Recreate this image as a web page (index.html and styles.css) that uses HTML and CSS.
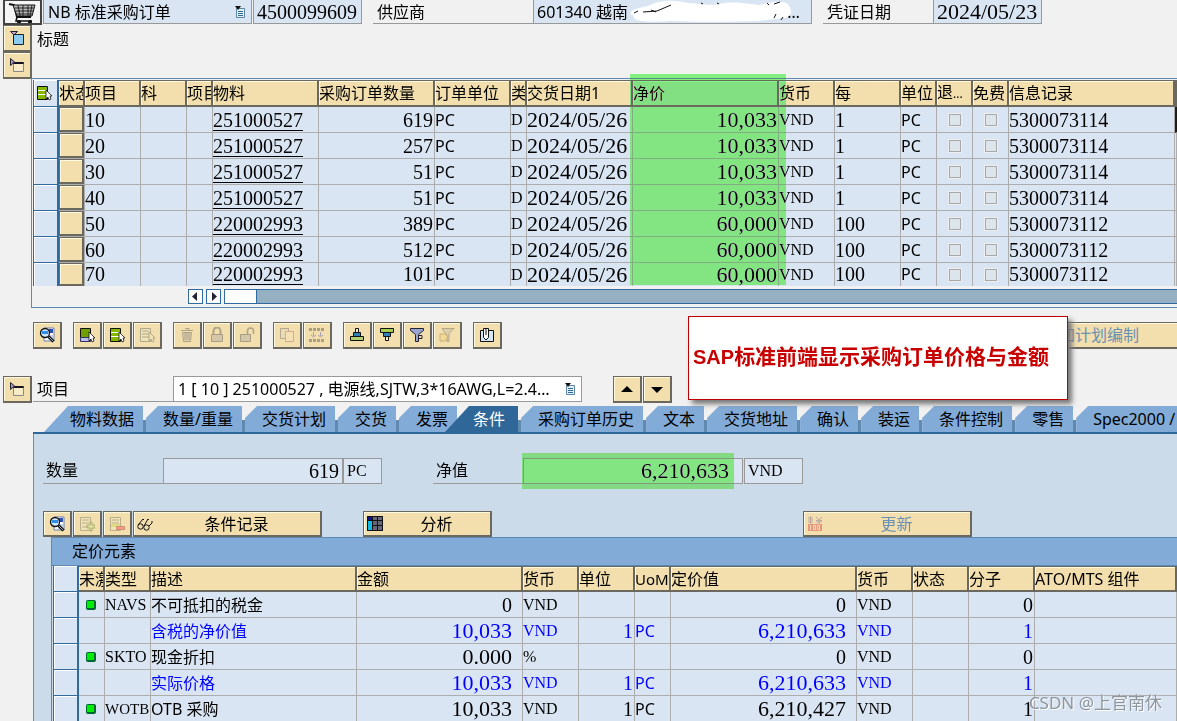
FILE: index.html
```html
<!DOCTYPE html>
<html lang="zh-CN">
<head>
<meta charset="utf-8">
<title>标准采购订单</title>
<link rel="stylesheet" href="styles.css">
</head>
<body>
<svg class="defs" width="0" height="0" aria-hidden="true">
  <defs>
    <symbol id="i-detail" viewBox="0 0 16 16"><path d="M5 1h10v13H5z" fill="#fff" stroke="#6a7fb0"/><path d="M10 2h4v4h-4z" fill="#2b50b0"/><path d="M11 8h3v5h-5z" fill="#c9cfea"/><circle cx="6" cy="6" r="4.5" fill="#cfe6ff" stroke="#111" stroke-width="1.3"/><path d="M3 4h6v3H3z" fill="#2f8fe8"/><path d="M9.500 9.500l5 5" stroke="#111" stroke-width="3"/><path d="M10 10l4 4" stroke="#9ab" stroke-width="1"/></symbol>
    <symbol id="i-doc" viewBox="0 0 12 12"><path d="M2.500 2.500h8v9h-8z" fill="#dff0fa" stroke="#5d86a8"/><path d="M4 5.500h5M4 7.500h5M4 9.500h5" stroke="#35698f"/><path d="M1 0h6L4 4z" fill="#111"/></symbol>
    <symbol id="i-open" viewBox="0 0 16 16"><path d="M4.500 4.500h10v10h-10z" fill="#8ecbf0" stroke="#123"/><path d="M1.500 1.500h7L5 5z" fill="#c8a8d0" stroke="#223"/></symbol>
    <symbol id="i-closed" viewBox="0 0 16 16"><path d="M4.500 6.500h10v8h-10z" fill="#f7ecc8" stroke="#888"/><path d="M4.500 5.500h10v1h-10z" fill="#fff" stroke="#112"/><path d="M1.500 1.500v7l4-3.500z" fill="#b08ac0" stroke="#223"/></symbol>
    <symbol id="i-list" viewBox="0 0 16 16"><path d="M1.500 1.500h10v4h-10zM1.500 5.500h10v4h-10zM1.500 9.500h10v5h-10z" fill="#86b800" stroke="#111"/><path d="M2 5.500h9M2 9.500h9" stroke="#fff"/><path d="M10 5v9l2-2 1 3 2-1-1-3h2z" fill="#fff" stroke="#111" stroke-width=".8"/></symbol>
    <symbol id="i-first" viewBox="0 0 16 16"><path d="M1.500 1.500h10v9h-10z" fill="#6fa000" stroke="#111"/><path d="M1.500 10.500h10v4h-10z" fill="#bcc0e8" stroke="#336"/><path d="M10 5v9l2-2 1 3 2-1-1-3h2z" fill="#fff" stroke="#111" stroke-width=".8"/></symbol>
    <symbol id="i-dlist" viewBox="0 0 16 16"><path d="M1.500 1.500h10v13h-10z" fill="#efe3b8" stroke="#b0a888"/><path d="M3 4h7M3 7h7M3 10h7" stroke="#b0a888"/><path d="M10 5v9l2-2 1 3 2-1-1-3h2z" fill="#f3e3b5" stroke="#b0a888"/></symbol>
    <symbol id="i-trash" viewBox="0 0 16 16"><path d="M3.500 5.500h9l-1 9h-7zM2 3.500h12M6 1.500h4v2" fill="#dccfac" stroke="#b0a488"/><path d="M6 6v7M8 6v7M10 6v7" stroke="#b0a488"/></symbol>
    <symbol id="i-lock" viewBox="0 0 16 16"><path d="M4.500 7V4a3.500 3.500 0 0 1 7 0v3" fill="none" stroke="#b0a488" stroke-width="2"/><path d="M2.500 7.500h11v7h-11z" fill="#d4c7a8" stroke="#a89d84"/></symbol>
    <symbol id="i-unlock" viewBox="0 0 16 16"><path d="M8.500 7V4a3 3 0 0 1 6 0v3" fill="none" stroke="#b0a488" stroke-width="1.6"/><path d="M1.500 7.500h10v7h-10z" fill="#d4c7a8" stroke="#a89d84"/></symbol>
    <symbol id="i-copy" viewBox="0 0 16 16"><path d="M1.500 1.500h8v10h-8z" fill="#eadbb2" stroke="#b5a890"/><path d="M6.500 4.500h8v10h-8z" fill="#f4e0b5" stroke="#d8a890"/></symbol>
    <symbol id="i-split" viewBox="0 0 16 16"><path d="M0 2.500h16M0 13.500h16" stroke="#aa9e84" stroke-width="3" stroke-dasharray="3 1"/><path d="M4.500 5v4M11.500 5v4M2 8l2.500 2L7 8M9 8l2.500 2L14 8" fill="none" stroke="#a8a0b0"/></symbol>
    <symbol id="i-asc" viewBox="0 0 16 16"><path d="M6.500 1.500h3v4h-3z" fill="#f5edcc" stroke="#111"/><path d="M4.500 5.500h7v4h-7z" fill="#2f7fb8" stroke="#111"/><path d="M1.500 9.500h13v4h-13z" fill="#b0d070" stroke="#111"/></symbol>
    <symbol id="i-desc" viewBox="0 0 16 16"><path d="M1.500 1.500h13v4h-13z" fill="#a8cc50" stroke="#111"/><path d="M4.500 5.500h7v4h-7z" fill="#2f7fb8" stroke="#111"/><path d="M6.500 9.500h3v4h-3z" fill="#f5edcc" stroke="#111"/></symbol>
    <symbol id="i-filter" viewBox="0 0 16 16"><path d="M1.500 1.500h13v2l-5 4v7h-3v-7l-5-4z" fill="#98a6d0" stroke="#223"/><path d="M10 8.500h3v3h-3" fill="none" stroke="#223"/></symbol>
    <symbol id="i-unfilter" viewBox="0 0 16 16"><path d="M3 1.500h12l-5 5v8H8v-6z" fill="#dccfac" stroke="#b5a888"/><path d="M1 7h5l3 3-3 4H1z" fill="#f2d998" stroke="#c8b078"/></symbol>
    <symbol id="i-clip" viewBox="0 0 16 16"><path d="M1.500 3.500h13v11h-13z" fill="#d5e6f5" stroke="#111"/><path d="M4.500 6V1.500h5v9L7 13l-2.500-2.500z" fill="#fff" stroke="#111"/><path d="M7 1v7" stroke="#111"/></symbol>
    <symbol id="i-add" viewBox="0 0 16 16"><path d="M1.500 1.500h10v13h-10z" fill="#efe3b8" stroke="#bcae88"/><path d="M3 4h7M3 7h7M3 11h6" stroke="#bcae88"/><path d="M8 9h3V6h2v3h3v3h-3v3h-2v-3H8z" fill="#dede98" stroke="#a8ac70"/></symbol>
    <symbol id="i-del" viewBox="0 0 16 16"><path d="M1.500 1.500h10v13h-10z" fill="#efe3b8" stroke="#bcae88"/><path d="M3 4h7M3 7h7" stroke="#bcae88"/><path d="M2 8h9v3H2z" fill="#dcdc80"/><path d="M7.500 10.500h8v3h-8z" fill="#f0a088" stroke="#d88870"/></symbol>
    <symbol id="i-glasses" viewBox="0 0 16 16"><path d="M1 9l5-6 1 1M7 10l4-7 1 1M12 10l3-3v-2" fill="none" stroke="#111"/><circle cx="3.500" cy="10.500" r="2.700" fill="none" stroke="#111"/><circle cx="9.500" cy="11.500" r="2.700" fill="none" stroke="#111"/></symbol>
    <symbol id="i-table" viewBox="0 0 16 16"><path d="M0 0h16v15H0z" fill="#111"/><path d="M1 1h4v3H1z" fill="#118"/><path d="M1 5h4v9H1z" fill="#17b8e8"/><path d="M6 1h4v3H6zM11 1h4v3h-4zM6 5h4v4H6zM11 5h4v4h-4zM6 10h4v4H6zM11 10h4v4h-4z" fill="#667"/></symbol>
    <symbol id="i-price" viewBox="0 0 16 16"><path d="M1 2h5M1 4h5M1 6h5M3.500 0v8M9 1l3 3 3-3M9 4.500h6M9 6h6M12 4v4" fill="none" stroke="#bda8a0"/><path d="M1 8h14v7H1z" fill="#e8967a"/><path d="M3.500 9v5M6.500 9.500h2v4h-2zM10.500 9.500h2v4h-2z" fill="none" stroke="#f8dfc0"/></symbol>
  </defs>
</svg>

<main class="app">
  <header class="head">
    <button class="cart" aria-label="采购订单"><svg width="30" height="24" viewBox="0 0 30 24"><path d="M1 3l5 1 3 12h14" fill="none" stroke="#111" stroke-width="2"/><path d="M5 4h22l-3 11H9z" fill="#bbb" stroke="#111"/><path d="M7 7h19M8 10h17M9 13h16M10 4l2 11M15 4v11M20 4v11M24 4l-2 11" stroke="#222" stroke-width="1"/><path d="M9 16l-1 4h16" fill="none" stroke="#111" stroke-width="1.500"/><circle cx="11" cy="21" r="2" fill="#111"/><circle cx="22" cy="21" r="2" fill="#111"/></svg></button>
    <div class="pick pick-type"><select aria-label="订单类型"><option>NB 标准采购订单</option></select><svg class="pick-icon"><use href="#i-doc"/></svg></div>
    <input class="field num w-order" value="4500099609" readonly aria-label="订单编号">
    <label class="caption w-vendor-label" for="vendor">供应商</label>
    <div class="vendor"><input class="field" id="vendor" value="601340 越南" readonly>
      <svg class="smear" viewBox="0 0 166 23"><path d="M4 15C0 8 20 8 28 3 42-1 50 1 62 3c18 1 20 3 30 1 16-3 22-1 40 1 10-3 24-5 29-1 5 8 4 12-3 14-12 1-18 2-26 3-34 1-64 1-88 0-22 1-38 2-38-6z" fill="#fff"/><path d="M7 13l4-2M16 12l14-1M30 11l14-6M24 10l5 2M76 4l-2-1M92 4l-2-1M142 5l-2-2M147 4l6-2M147 18l2-4M156 17l-2 3" stroke="#111" fill="none"/></svg>
      <span class="more">…</span></div>
    <label class="caption w-date-label" for="docdate">凭证日期</label>
    <input class="field fig w-date" id="docdate" value="2024/05/23" readonly>
  </header>

  <div class="upper">
    <div class="side">
      <button class="btn icon" aria-label="展开抬头"><svg><use href="#i-open"/></svg></button>
      <button class="btn icon" aria-label="展开标题"><svg><use href="#i-closed"/></svg></button>
    </div>
    <div class="title">标题</div>
  </div>

  <section class="items">
    <table class="grid">
      <colgroup><col class="c26"><col class="c26"><col class="c56"><col class="c46"><col class="c26"><col class="c106"><col class="c116"><col class="c76"><col class="c16"><col class="c106"><col class="c146"><col class="c56"><col class="c66"><col class="c36"><col class="c36"><col class="c36"><col class="c166"><col></colgroup>
      <thead><tr><th class="sel"><svg class="ic"><use href="#i-list"/></svg></th><th>状态</th><th>项目</th><th>科</th><th>项目</th><th>物料</th><th>采购订单数量</th><th>订单单位</th><th>类</th><th>交货日期1</th><th>净价</th><th>货币</th><th>每</th><th>单位</th><th>退<small>...</small></th><th>免费</th><th>信息记录</th><th></th></tr></thead>
      <tbody>
        <tr><td class="sel"></td><td class="st"><button aria-label="状态"></button></td><td class="num">10</td><td></td><td></td><td class="num"><a href="#">251000527</a></td><td class="num r">619</td><td>PC</td><td class="code">D</td><td class="fig">2024/05/26</td><td class="fig r">10,033</td><td class="code">VND</td><td class="num">1</td><td>PC</td><td class="ck"><input type="checkbox" disabled aria-label="退货"></td><td class="ck"><input type="checkbox" disabled aria-label="免费"></td><td class="num">5300073114</td><td class="mark"></td></tr>
        <tr><td class="sel"></td><td class="st"><button aria-label="状态"></button></td><td class="num">20</td><td></td><td></td><td class="num"><a href="#">251000527</a></td><td class="num r">257</td><td>PC</td><td class="code">D</td><td class="fig">2024/05/26</td><td class="fig r">10,033</td><td class="code">VND</td><td class="num">1</td><td>PC</td><td class="ck"><input type="checkbox" disabled aria-label="退货"></td><td class="ck"><input type="checkbox" disabled aria-label="免费"></td><td class="num">5300073114</td><td></td></tr>
        <tr><td class="sel"></td><td class="st"><button aria-label="状态"></button></td><td class="num">30</td><td></td><td></td><td class="num"><a href="#">251000527</a></td><td class="num r">51</td><td>PC</td><td class="code">D</td><td class="fig">2024/05/26</td><td class="fig r">10,033</td><td class="code">VND</td><td class="num">1</td><td>PC</td><td class="ck"><input type="checkbox" disabled aria-label="退货"></td><td class="ck"><input type="checkbox" disabled aria-label="免费"></td><td class="num">5300073114</td><td></td></tr>
        <tr><td class="sel"></td><td class="st"><button aria-label="状态"></button></td><td class="num">40</td><td></td><td></td><td class="num"><a href="#">251000527</a></td><td class="num r">51</td><td>PC</td><td class="code">D</td><td class="fig">2024/05/26</td><td class="fig r">10,033</td><td class="code">VND</td><td class="num">1</td><td>PC</td><td class="ck"><input type="checkbox" disabled aria-label="退货"></td><td class="ck"><input type="checkbox" disabled aria-label="免费"></td><td class="num">5300073114</td><td></td></tr>
        <tr><td class="sel"></td><td class="st"><button aria-label="状态"></button></td><td class="num">50</td><td></td><td></td><td class="num"><a href="#">220002993</a></td><td class="num r">389</td><td>PC</td><td class="code">D</td><td class="fig">2024/05/26</td><td class="fig r">60,000</td><td class="code">VND</td><td class="num">100</td><td>PC</td><td class="ck"><input type="checkbox" disabled aria-label="退货"></td><td class="ck"><input type="checkbox" disabled aria-label="免费"></td><td class="num">5300073112</td><td></td></tr>
        <tr><td class="sel"></td><td class="st"><button aria-label="状态"></button></td><td class="num">60</td><td></td><td></td><td class="num"><a href="#">220002993</a></td><td class="num r">512</td><td>PC</td><td class="code">D</td><td class="fig">2024/05/26</td><td class="fig r">60,000</td><td class="code">VND</td><td class="num">100</td><td>PC</td><td class="ck"><input type="checkbox" disabled aria-label="退货"></td><td class="ck"><input type="checkbox" disabled aria-label="免费"></td><td class="num">5300073112</td><td></td></tr>
        <tr><td class="sel"></td><td class="st"><button aria-label="状态"></button></td><td class="num">70</td><td></td><td></td><td class="num"><a href="#">220002993</a></td><td class="num r">101</td><td>PC</td><td class="code">D</td><td class="fig">2024/05/26</td><td class="fig r">60,000</td><td class="code">VND</td><td class="num">100</td><td>PC</td><td class="ck"><input type="checkbox" disabled aria-label="退货"></td><td class="ck"><input type="checkbox" disabled aria-label="免费"></td><td class="num">5300073112</td><td></td></tr>
      </tbody>
    </table>
    <div class="scroll">
      <button aria-label="向左"><svg viewBox="0 0 13 13"><path d="M8 2v9L3 6.500z" fill="#223"/></svg></button>
      <button aria-label="向右"><svg viewBox="0 0 13 13"><path d="M5 2v9l5-4.500z" fill="#223"/></svg></button>
      <div class="track"><div class="thumb"></div></div>
    </div>
    <div class="glow glow-price"></div>
  </section>

  <div class="tools">
    <div class="group"><button class="btn icon" aria-label="明细"><svg><use href="#i-detail"/></svg></button></div>
    <div class="group"><button class="btn icon" aria-label="选择"><svg><use href="#i-first"/></svg></button><button class="btn icon" aria-label="全选"><svg><use href="#i-list"/></svg></button><button class="btn icon" disabled aria-label="取消选择"><svg><use href="#i-dlist"/></svg></button></div>
    <div class="group"><button class="btn icon" disabled aria-label="删除"><svg><use href="#i-trash"/></svg></button><button class="btn icon" disabled aria-label="锁定"><svg><use href="#i-lock"/></svg></button><button class="btn icon" disabled aria-label="解锁"><svg><use href="#i-unlock"/></svg></button></div>
    <div class="group"><button class="btn icon" disabled aria-label="复制"><svg><use href="#i-copy"/></svg></button><button class="btn icon" disabled aria-label="拆分"><svg><use href="#i-split"/></svg></button></div>
    <div class="group"><button class="btn icon" aria-label="升序"><svg><use href="#i-asc"/></svg></button><button class="btn icon" aria-label="降序"><svg><use href="#i-desc"/></svg></button><button class="btn icon" aria-label="筛选"><svg><use href="#i-filter"/></svg></button><button class="btn icon" disabled aria-label="取消筛选"><svg><use href="#i-unfilter"/></svg></button></div>
    <div class="group"><button class="btn icon" aria-label="附件"><svg><use href="#i-clip"/></svg></button></div>
    <button class="btn plan" disabled>加计划编制</button>
    <div class="note"><span>SAP</span>标准前端显示采购订单价格与金额</div>
  </div>

  <div class="itemrow">
    <button class="btn icon" aria-label="项目明细"><svg><use href="#i-closed"/></svg></button>
    <label class="caption w-item-label" for="item">项目</label>
    <div class="pick pick-item"><select id="item"><option>1 [ 10 ] 251000527 , 电源线,SJTW,3*16AWG,L=2.4…</option></select><svg class="pick-icon"><use href="#i-doc"/></svg></div>
    <div class="group"><button class="btn icon" aria-label="上一项"><svg viewBox="0 0 16 16"><path d="M2 11h12L8 5z"/></svg></button><button class="btn icon" aria-label="下一项"><svg viewBox="0 0 16 16"><path d="M2 6h12l-6 6z"/></svg></button></div>
  </div>

  <nav class="tabs">
    <button class="tab first"><span>物料数据</span></button><button class="tab"><span>数量/重量</span></button><button class="tab"><span>交货计划</span></button><button class="tab"><span>交货</span></button><button class="tab"><span>发票</span></button><button class="tab active"><span>条件</span></button><button class="tab"><span>采购订单历史</span></button><button class="tab"><span>文本</span></button><button class="tab"><span>交货地址</span></button><button class="tab"><span>确认</span></button><button class="tab"><span>装运</span></button><button class="tab"><span>条件控制</span></button><button class="tab"><span>零售</span></button><button class="tab last"><span>Spec2000 /</span></button>
  </nav>

  <section class="panel">
    <div class="totals">
      <label class="caption w-qty-label" for="qty">数量</label>
      <input class="field num r w-qty" id="qty" value="619" readonly>
      <input class="field code w-unit" value="PC" readonly aria-label="数量单位">
      <label class="caption w-net-label" for="net">净值</label>
      <div class="net"><input class="field fig r" id="net" value="6,210,633" readonly><div class="glow glow-net"></div></div>
      <input class="field code w-cur" value="VND" readonly aria-label="货币">
    </div>
    <div class="actions">
      <button class="btn icon" aria-label="明细"><svg><use href="#i-detail"/></svg></button>
      <button class="btn icon" disabled aria-label="插入行"><svg><use href="#i-add"/></svg></button>
      <button class="btn icon" disabled aria-label="删除行"><svg><use href="#i-del"/></svg></button>
      <button class="btn text w-record"><svg><use href="#i-glasses"/></svg><span>条件记录</span></button>
      <button class="btn text w-analyse"><svg><use href="#i-table"/></svg><span>分析</span></button>
      <button class="btn text w-update" disabled><svg><use href="#i-price"/></svg><span>更新</span></button>
    </div>
    <div class="pricing">
      <h2>定价元素</h2>
      <table class="grid prices">
        <colgroup><col class="c26"><col class="c26"><col class="c46"><col class="c206"><col class="c166"><col class="c56"><col class="c56"><col class="c36"><col class="c186"><col class="c56"><col class="c56"><col class="c66"><col></colgroup>
        <thead><tr><th class="sel"></th><th>未激活</th><th>类型</th><th>描述</th><th>金额</th><th>货币</th><th>单位</th><th class="tight">UoM</th><th>定价值</th><th>货币</th><th>状态</th><th>分子</th><th>ATO/MTS 组件</th></tr></thead>
        <tbody>
          <tr><td class="sel"></td><td class="led"><i></i></td><td class="code">NAVS</td><td>不可抵扣的税金</td><td class="num r wide">0</td><td class="code">VND</td><td></td><td></td><td class="num r wide">0</td><td class="code">VND</td><td></td><td class="num r">0</td><td></td></tr>
          <tr class="sum"><td class="sel"></td><td></td><td></td><td>含税的净价值</td><td class="fig r wide">10,033</td><td class="code">VND</td><td class="num r">1</td><td>PC</td><td class="fig r wide">6,210,633</td><td class="code">VND</td><td></td><td class="num r">1</td><td></td></tr>
          <tr><td class="sel"></td><td class="led"><i></i></td><td class="code">SKTO</td><td>现金折扣</td><td class="fig r wide">0.000</td><td class="code">%</td><td></td><td></td><td class="num r wide">0</td><td class="code">VND</td><td></td><td class="num r">0</td><td></td></tr>
          <tr class="sum"><td class="sel"></td><td></td><td></td><td>实际价格</td><td class="fig r wide">10,033</td><td class="code">VND</td><td class="num r">1</td><td>PC</td><td class="fig r wide">6,210,633</td><td class="code">VND</td><td></td><td class="num r">1</td><td></td></tr>
          <tr><td class="sel"></td><td class="led"><i></i></td><td class="code tight">WOTB</td><td>OTB 采购</td><td class="fig r wide">10,033</td><td class="code">VND</td><td class="num r">1</td><td>PC</td><td class="fig r wide">6,210,427</td><td class="code">VND</td><td></td><td class="num r">1</td><td></td></tr>
        </tbody>
      </table>
    </div>
  </section>
  <div class="credit">CSDN @上官南休</div>
</main>
</body>
</html>
```

FILE: styles.css
```css
* { box-sizing: border-box; }
body {
  margin: 0;
  background: #f1f1f1;
  color: #000;
  font: 16px/24px "Noto Sans", "Noto Sans CJK SC", sans-serif;
  overflow: hidden;
}
button, input, select { font: inherit; color: inherit; margin: 0; padding: 0; border-radius: 0; }
.defs { position: absolute; }
.app { position: relative; height: 100vh; overflow: hidden; white-space: nowrap; }

/* fields */
.field {
  display: block;
  width: 100%;
  height: 26px;
  padding: 0 3px;
  border: 1px solid #999;
  background: #d9e5f3;
  outline: 0;
}
.caption { display: block; padding-left: 4px; border-bottom: 1px solid #999; }
.num { font: 20px/24px "Liberation Serif", serif; }
.fig { font: 22px/24px "Liberation Serif", serif; }
.code { font: 16px/24px "Liberation Serif", serif; }
.r { text-align: right; }

.pick { position: relative; border: 1px solid #999; }
.pick select {
  display: block;
  width: 100%;
  height: 100%;
  padding: 0 20px 0 4px;
  border: 0;
  background: transparent;
  appearance: none;
}
.pick-icon { position: absolute; right: 5px; top: 6px; width: 12px; height: 12px; pointer-events: none; }

/* buttons */
.btn {
  display: flex;
  align-items: center;
  justify-content: center;
  height: 27px;
  border: 1px solid #6b6860;
  border-width: 1px 2px 2px 1px;
  background: #f3dfae;
  box-shadow: inset 1px 1px #fff9e0;
}
.btn:disabled { color: #6a90b4; }
.icon { flex: none; width: 29px; }
.btn svg { flex: none; width: 16px; height: 16px; }
.group { display: flex; gap: 1px; }

/* order header */
.head { display: flex; height: 25px; padding-left: 3px; }
.head .field, .pick-type { height: 24px; border-top: 0; }
.head .caption { height: 24px; }
.cart { width: 39px; height: 25px; border: 2px solid #444; border-top-width: 1px; background: #f5f5f5; overflow: hidden; }
.cart svg { display: block; margin: 0 auto; }
.pick-type { width: 209px; margin: 0 1px; background: #d9e5f3; }
.head .w-order { width: 109px; }
.w-vendor-label { width: 160px; margin-left: 11px; }
.vendor { position: relative; width: 279px; }
.smear { position: absolute; left: 94px; top: 0; width: 166px; height: 23px; }
.more { position: absolute; right: 12px; top: 0; }
.w-date-label { width: 110px; margin-left: 11px; }
.head .w-date { width: 109px; }

.upper { display: flex; height: 53px; padding-left: 3px; }
.side { width: 29px; }
.title { padding: 2px 5px; }

/* tables */
.items { position: relative; margin-left: 31px; padding: 1px 0 3px 1px; border: 1px solid #5b8bb5; border-right: 0; }
.grid { width: 100%; border-collapse: separate; border-spacing: 0; table-layout: fixed; }
.grid th, .grid td { height: 26px; padding: 0 1px 0 0; overflow: hidden; }
.grid th {
  border-right: 2px solid #6b6860;
  border-top: 1px solid #6b6860;
  border-bottom: 2px solid #6b6860;
  background: #f3dfae;
  box-shadow: inset 1px 1px #fff9e0;
  font-weight: 400;
  line-height: 22px;
  text-align: left;
}
.grid th small { font-size: 12px; }
.grid td { border-right: 1px solid #adadad; border-bottom: 1px solid #adadad; background: #d9e5f3; line-height: 24px; }
.grid .sel { border: 1px solid #2f6b9e; border-width: 0 2px 1px 1px; background: #d9e5f3; box-shadow: inset 1px 1px #fff; }
.grid .ck { padding: 0; text-align: center; }
.grid .mark { border-left: 2px solid #221a16; }
.grid .wide { padding-right: 10px; }
.grid .tight { font-size: 15px; }
.grid a { color: inherit; text-decoration: underline; text-underline-offset: 3px; text-decoration-thickness: 1px; }
.ic { display: block; width: 16px; height: 16px; margin-left: 2px; }
.st button { display: block; width: 25px; height: 25px; border: 1px solid #6b6860; border-width: 1px 2px 2px 1px; background: #f3dfae; box-shadow: inset 1px 1px #fff9e0; }
.grid .st { padding: 0; }
.ck input { display: block; width: 14px; height: 14px; margin: 0 auto; appearance: none; border: 2px solid #a8a8a8; outline: 1px solid #eee; outline-offset: -1px; background: #dde5ec; }
.items tbody tr:last-child td { height: 23px; border-bottom: 0; line-height: 23px; }
.items tbody tr:last-child button { height: 23px; }
.c16 { width: 16px; } .c26 { width: 26px; } .c36 { width: 36px; }
.c46 { width: 46px; } .c56 { width: 56px; } .c66 { width: 66px; } .c76 { width: 76px; }
.c106 { width: 106px; } .c116 { width: 116px; } .c146 { width: 146px; } .c166 { width: 166px; }
.c186 { width: 186px; } .c206 { width: 206px; }

.scroll { display: flex; gap: 3px; margin-top: 3px; padding-left: 155px; }
.scroll button { width: 15px; height: 15px; border: 1px solid #2f6b9e; background: #fff; }
.scroll button svg { display: block; width: 13px; height: 13px; }
.track { flex: 1; height: 15px; border: 1px solid #2f6b9e; border-right: 0; background: #94b0c2; }
.thumb { width: 32px; height: 13px; border-right: 1px solid #2f6b9e; background: #fff; }

/* marker highlights lie over the cells */
.glow { position: absolute; background: #82ff82; mix-blend-mode: darken; pointer-events: none; }
.glow-price { left: 598px; top: -5px; width: 156px; height: 211px; }
.glow-net { left: -1px; top: -5px; width: 212px; height: 36px; }

/* item toolbar */
.tools { position: relative; display: flex; gap: 11px; margin-top: 14px; padding-left: 33px; }
.plan { flex: 1; justify-content: flex-start; margin-left: 480px; padding-left: 65px; border-right: 0; }
.note {
  position: absolute;
  left: 688px;
  top: -6px;
  width: 380px;
  height: 84px;
  padding-left: 4px;
  border: 1px solid #c00000;
  background: #fff;
  box-shadow: 4px 4px 5px #777;
  color: #c80000;
  font: bold 21px/80px "Liberation Sans", "Noto Sans CJK SC", sans-serif;
  z-index: 2;
}
.note span { font-size: 20px; }

.itemrow { display: flex; margin-top: 27px; padding-left: 3px; }
.itemrow .caption { height: 26px; line-height: 27px; }
.w-item-label { width: 140px; margin-left: 1px; }
.pick-item { width: 409px; height: 26px; margin-right: 31px; background: #fff; }

/* tab strip */
.tabs { display: flex; height: 28px; margin: 3px 0 0 33px; padding-left: 11px; border-bottom: 2px solid #2f6898; }
.tab { flex: none; height: 26px; border: 0; background: linear-gradient(#6089b0, #6089b0) left bottom / 3px 12px no-repeat; }
.tab span { display: block; height: 26px; padding: 0 9px 0 20px; background: #83abd8; clip-path: polygon(3px 100%, 3px 12px, 15px 0, 100% 0, 100% 100%); line-height: 26px; }
.tab.first { background: none; }
.tab.first span { padding-left: 26px; clip-path: polygon(0 100%, 24px 0, 100% 0, 100% 100%); }
.tab.active { margin-left: -12px; background: none; color: #fff; position: relative; }
.tab.active span { padding: 0 13px 0 28px; background: #2f6898; clip-path: polygon(0 100%, 24px 0, 100% 0, 100% 100%); }
.tab.last { flex: 1; text-align: left; }

.panel { margin-left: 33px; padding-top: 24px; border-left: 1px solid #6a90b8; background: #ccdbe9; }
.totals { display: flex; padding-left: 9px; }
.totals .caption { height: 26px; padding-left: 3px; }
.w-qty-label { width: 120px; }
.totals .w-qty { width: 180px; }
.totals .w-unit { width: 39px; }
.w-net-label { width: 90px; margin-left: 51px; }
.net { position: relative; width: 220px; }
.net .field { padding-right: 13px; }
.totals .w-cur { width: 59px; margin-left: 1px; }

.actions { display: flex; gap: 1px; margin-top: 27px; padding-left: 9px; }
.actions .btn { height: 26px; }
.text { padding-left: 3px; }
.text span { flex: 1; text-align: center; }
.w-record { width: 189px; }
.w-analyse { width: 129px; margin-left: 40px; }
.w-update { width: 169px; margin-left: 310px; }

.pricing { margin-left: 17px; border: 1px solid #5b8bb5; border-width: 1px 0 0 1px; }
.pricing h2 { height: 28px; margin: 0; padding: 1px 20px; border-bottom: 1px solid #5b8bb5; background: #83abd8; font-size: 16px; font-weight: 400; }
.prices { padding-left: 1px; }
.sum { color: #00f; }
.led i { display: block; width: 10px; height: 10px; margin: 0 auto; border: 1px solid #063; border-width: 1px 2px 2px 1px; border-radius: 2px; background: #0e0; }
.credit { position: absolute; right: 15px; bottom: 6px; color: #8d959e; font-size: 17px; text-shadow: 1px 1px #fff; }
```
